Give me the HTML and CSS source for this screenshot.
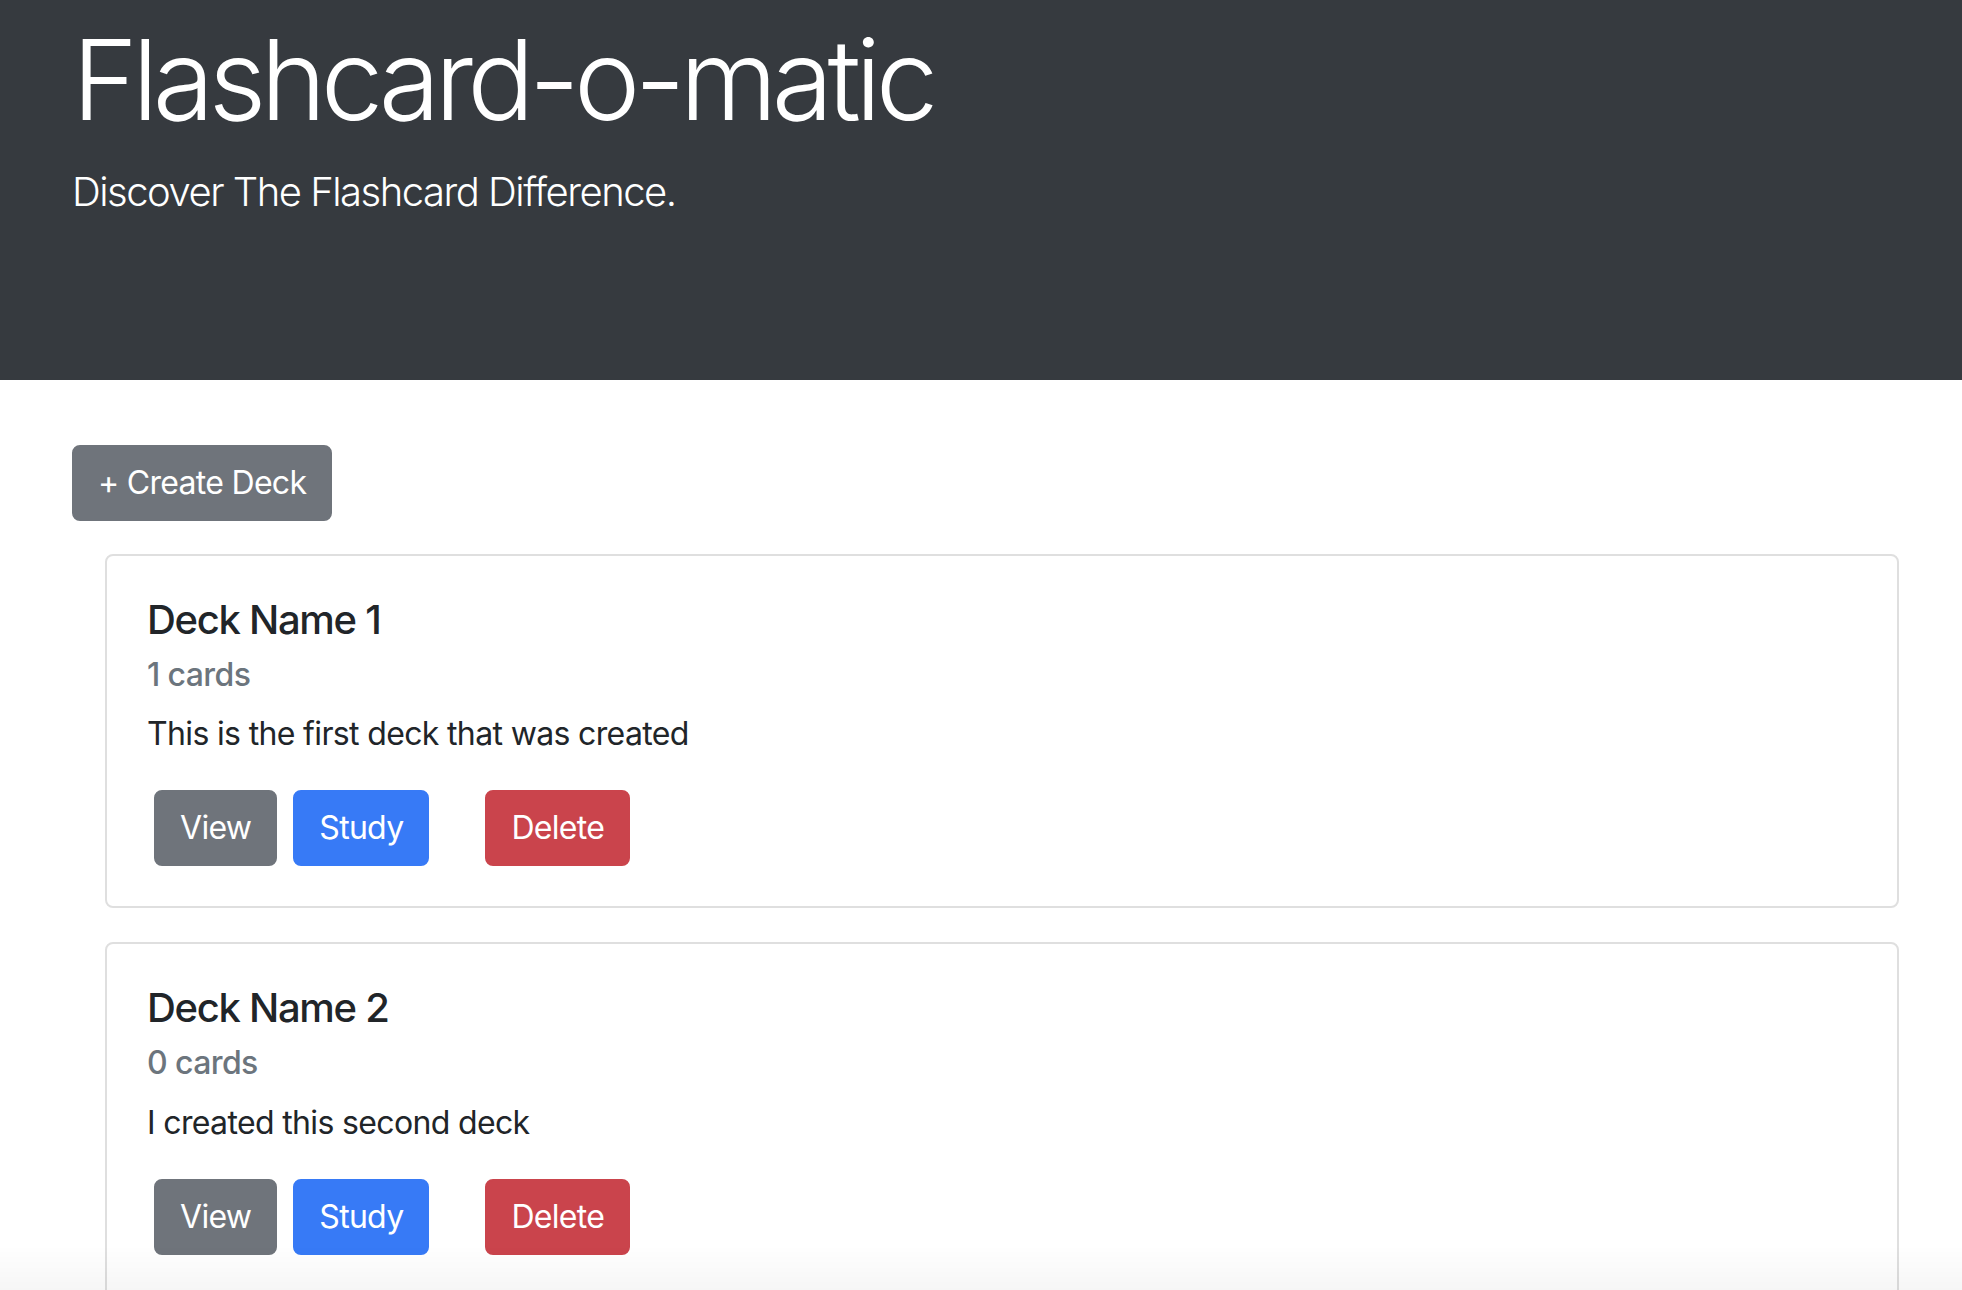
FILE: index.html
```html
<!DOCTYPE html>
<html lang="en">
<head>
<meta charset="utf-8">
<title>Flashcard-o-matic</title>
<link rel="stylesheet" href="styles.css">
</head>
<body>
<header class="hero">
  <h1 class="hero-title">Flashcard-o-matic</h1>
  <p class="hero-lead">Discover The Flashcard Difference.</p>
</header>
<main class="page">
  <button class="btn btn-secondary btn-create">+ Create Deck</button>
  <div class="deck-list">
    <section class="card">
      <h5 class="card-title">Deck Name 1</h5>
      <h6 class="card-subtitle">1 cards</h6>
      <p class="card-text">This is the first deck that was created</p>
      <div class="card-actions">
        <button class="btn btn-secondary">View</button>
        <button class="btn btn-primary">Study</button>
        <button class="btn btn-danger btn-delete">Delete</button>
      </div>
    </section>
    <section class="card">
      <h5 class="card-title">Deck Name 2</h5>
      <h6 class="card-subtitle">0 cards</h6>
      <p class="card-text">I created this second deck</p>
      <div class="card-actions">
        <button class="btn btn-secondary">View</button>
        <button class="btn btn-primary">Study</button>
        <button class="btn btn-danger btn-delete">Delete</button>
      </div>
    </section>
  </div>
</main>
<div class="bottom-fade"></div>
</body>
</html>
```

FILE: styles.css
```css
html, body {
  margin: 0;
  padding: 0;
  overflow: hidden;
  height: 100%;
}
body {
  font-family: Inter, "Liberation Sans", sans-serif;
  color: #212529;
  background: #ffffff;
  font-size: 32px;
  line-height: 1.5;
  letter-spacing: -0.65px;
}
.hero {
  background: #363a3f;
  color: #ffffff;
  height: 380px;
  box-sizing: border-box;
  padding: 12px 72px 0;
}
.hero-title {
  margin: 0 0 16px;
  font-size: 112px;
  font-weight: 300;
  line-height: 1.2;
  letter-spacing: -5.7px;
}
.hero-lead {
  margin: 0;
  font-size: 40px;
  font-weight: 300;
  line-height: 1.5;
  letter-spacing: -1.5px;
}
.page {
  padding: 65px 63px 0 72px;
}
.btn {
  font-family: inherit;
  font-size: 32px;
  line-height: 48px;
  font-weight: 400;
  letter-spacing: -0.7px;
  padding: 12px 24px;
  border: 2px solid transparent;
  border-radius: 8px;
  color: #ffffff;
  cursor: pointer;
  display: inline-block;
}
.btn-secondary { background: #6f747b; border-color: #6f747b; }
.btn-primary { background: #377af6; border-color: #377af6; }
.btn-danger { background: #ca444c; border-color: #ca444c; }
.btn-create {
  display: block;
  margin: 0 0 33px;
}
.deck-list {
  margin-left: 33px;
  display: flex;
  flex-direction: column;
  gap: 34px;
}
.card {
  border: 2px solid #dfdfdf;
  border-radius: 8px;
  padding: 40px;
}
.card-title {
  margin: 0 0 24px;
  font-size: 40px;
  font-weight: 500;
  line-height: 1.2;
  letter-spacing: -1.3px;
}
.card-subtitle {
  margin: -12px 0 16px;
  font-size: 32px;
  font-weight: 500;
  line-height: 1.2;
  color: #6c757d;
  letter-spacing: -0.6px;
}
.card-text {
  margin: 0;
}
.card-actions {
  display: flex;
  padding: 32px 0 0 7px;
  gap: 16px;
}
.btn-delete {
  margin-left: 40px;
}
.bottom-fade {
  position: fixed;
  left: 0;
  right: 0;
  bottom: 0;
  height: 45px;
  background: linear-gradient(to bottom, rgba(0,0,0,0), rgba(0,0,0,0.035));
  pointer-events: none;
}
```
